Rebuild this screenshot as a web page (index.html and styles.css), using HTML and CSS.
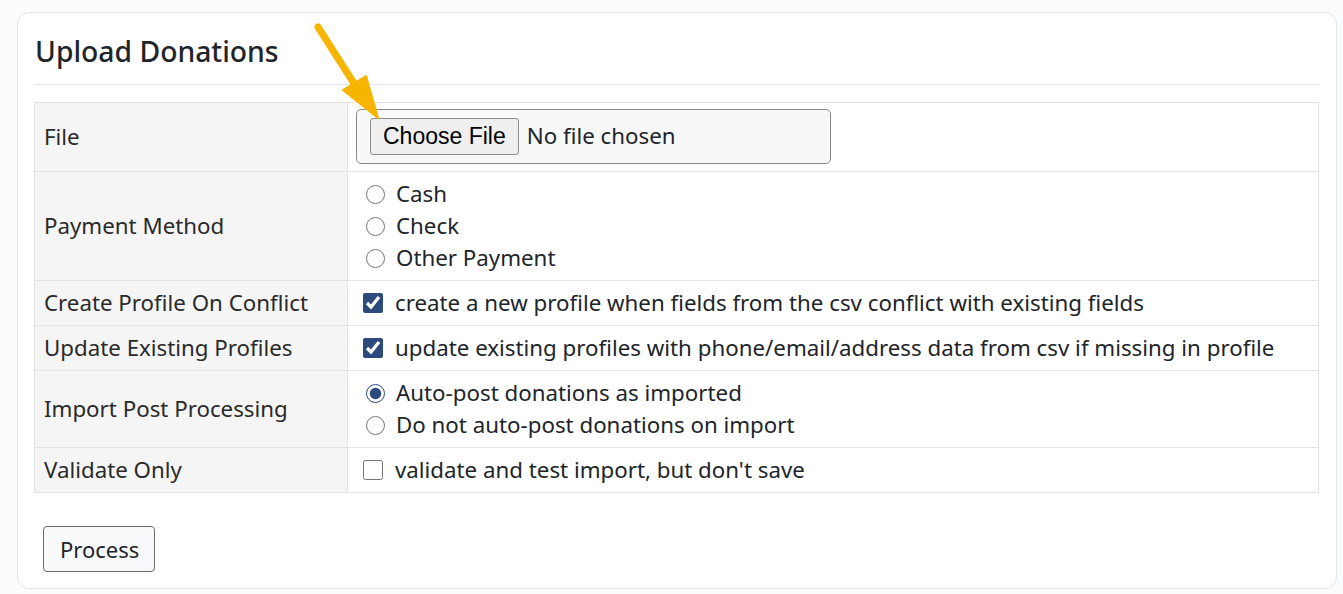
FILE: index.html
```html
<!DOCTYPE html>
<html lang="en">
<head>
<meta charset="utf-8">
<title>Upload Donations</title>
<link rel="stylesheet" href="styles.css">
</head>
<body>
<div class="card">
  <h2 class="title">Upload Donations</h2>
  <table class="form-table">
    <tr class="row-file">
      <th>File</th>
      <td><input class="file-input" type="file"></td>
    </tr>
    <tr>
      <th>Payment Method</th>
      <td>
        <label class="opt"><input type="radio" name="pm"> Cash</label>
        <label class="opt"><input type="radio" name="pm"> Check</label>
        <label class="opt"><input type="radio" name="pm"> Other Payment</label>
      </td>
    </tr>
    <tr>
      <th>Create Profile On Conflict</th>
      <td><label class="opt chk"><input type="checkbox" checked> create a new profile when fields from the csv conflict with existing fields</label></td>
    </tr>
    <tr>
      <th>Update Existing Profiles</th>
      <td><label class="opt chk"><input type="checkbox" checked> update existing profiles with phone/email/address data from csv if missing in profile</label></td>
    </tr>
    <tr>
      <th>Import Post Processing</th>
      <td>
        <label class="opt"><input type="radio" name="pp" checked> Auto-post donations as imported</label>
        <label class="opt"><input type="radio" name="pp"> Do not auto-post donations on import</label>
      </td>
    </tr>
    <tr>
      <th>Validate Only</th>
      <td><label class="opt chk"><input type="checkbox"> validate and test import, but don't save</label></td>
    </tr>
  </table>
  <div class="actions"><button class="btn" type="button">Process</button></div>
</div>
<svg class="arrow" width="1343" height="594" viewBox="0 0 1343 594">
  <line x1="318" y1="27" x2="362" y2="96" stroke="#f7b500" stroke-width="7" stroke-linecap="round"/>
  <polygon points="343,90 366,76 378,118" fill="#f7b500" stroke="#f7b500" stroke-width="2" stroke-linejoin="round"/>
</svg>
</body>
</html>
```

FILE: styles.css
```css
html, body {
  margin: 0;
  padding: 0;
}
body {
  background: #fbfcfd;
  font-family: "Noto Sans", "DejaVu Sans", sans-serif;
  color: #212529;
  padding: 12px 6px 6px 17px;
  position: relative;
  min-height: 594px;
  box-sizing: border-box;
}
.card {
  background: #fff;
  border: 1px solid #e1e5ec;
  border-radius: 12px;
  padding: 18px 17px 16px 16px;
}
.title {
  margin: 0 0 0 1px;
  padding: 0 0 13px;
  font-size: 28.3px;
  font-weight: 500;
  color: #212529;
  border-bottom: 1px solid #e1e5ec;
  line-height: 40px;
}
.form-table {
  margin-top: 17px;
  width: 100%;
  border-collapse: collapse;
  font-size: 22.3px;
}
.form-table th,
.form-table td {
  border: 1px solid #e3e3e3;
  padding: 6px 8px;
  vertical-align: middle;
  text-align: left;
  line-height: 32px;
}
.form-table th {
  width: 295px;
  background: #f5f5f5;
  font-weight: 400;
  color: #2a2a2a;
  padding-left: 9px;
}
.row-file td {
  padding-top: 6px;
  padding-bottom: 7px;
}
.file-input {
  box-sizing: border-box;
  width: 475px;
  height: 55px;
  border: 1px solid #8a8a8a;
  border-radius: 5px;
  background: #f8f8f8;
  font-family: "Noto Sans", sans-serif;
  font-size: 22.3px;
  color: #212529;
  padding: 8px 13px;
  display: block;
}
.file-input::file-selector-button {
  font-family: "Liberation Sans", Arial, sans-serif;
  font-size: 23px;
  height: 37px;
  padding: 0 12px;
  margin-right: 8px;
  border: 1px solid #8d8d8d;
  border-radius: 3px;
  background: #efefef;
  color: #000;
}
.opt {
  display: flex;
  align-items: center;
  line-height: 32px;
}
.opt input[type="radio"] {
  width: 19px;
  height: 19px;
  margin: 0 11px 0 10px;
  accent-color: #2c4a7c;
}
.opt.chk input[type="checkbox"] {
  width: 20px;
  height: 20px;
  margin: 0 12px 0 7px;
  accent-color: #2c4a7c;
}
.actions {
  padding: 33px 0 0 9px;
}
.btn {
  font-family: "Noto Sans", sans-serif;
  font-size: 22px;
  color: #212529;
  background: #f8f9fa;
  border: 1px solid #6c6c75;
  border-radius: 4px;
  height: 46px;
  padding: 0 15px 0 16px;
}
.arrow {
  position: absolute;
  left: 0;
  top: 0;
  pointer-events: none;
}
```
